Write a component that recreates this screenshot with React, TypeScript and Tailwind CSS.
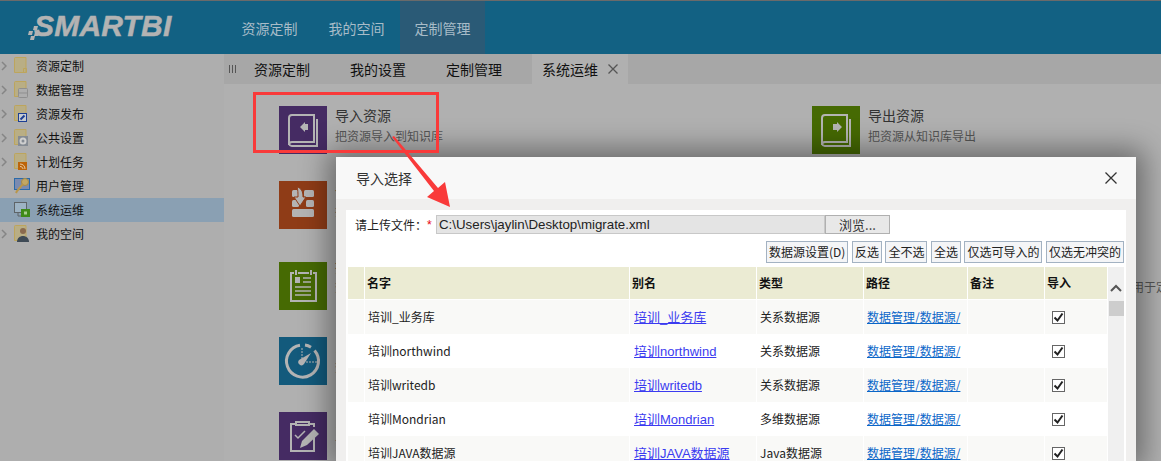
import type { ReactNode } from "react"

const folderFill = "#b9ae85"
const folderLine = "#bda55c"

function Folder({ children }: { children?: ReactNode }) {
    return (
        <svg width="17" height="18" viewBox="0 0 17 18">
            <path d="M.5 1.500a1 1 0 0 1 1-1h10.500v15H.5z" fill={folderFill} stroke={folderLine} />
            {children}
        </svg>
    )
}

const sideItems: { label: string; arrow: boolean; icon: ReactNode }[] = [
    {
        label: "资源定制",
        arrow: true,
        icon: (
            <Folder>
                <path d="M9.500 11.500h3v4h-3z" fill="none" stroke={folderLine} />
            </Folder>
        ),
    },
    {
        label: "数据管理",
        arrow: true,
        icon: (
            <Folder>
                <rect x="4.500" y="7.500" width="9" height="9" rx="1" fill="#aeaeae" stroke="#8f8f8f" />
                <path d="M5 12h8" stroke="#8f8f8f" />
            </Folder>
        ),
    },
    {
        label: "资源发布",
        arrow: true,
        icon: (
            <Folder>
                <rect x="4.500" y="8.500" width="8" height="8" fill="#c8ccd0" stroke="#1d3f94" />
                <path d="M6.500 14.500l4-4" stroke="#1d3f94" strokeWidth="2" />
            </Folder>
        ),
    },
    {
        label: "公共设置",
        arrow: true,
        icon: (
            <Folder>
                <rect x="4" y="7" width="10" height="10" fill="#858b93" />
                <circle cx="9" cy="12" r="2.500" fill="none" stroke="#cfcfcf" strokeWidth="2" />
            </Folder>
        ),
    },
    {
        label: "计划任务",
        arrow: true,
        icon: (
            <Folder>
                <rect x="4" y="9" width="9" height="8" fill="#bd6409" />
                <path d="M6 11c3 0 5 2 5 5M6 13.500c1.500 0 3 1 3 2.500" fill="none" stroke="#e8c9a0" />
            </Folder>
        ),
    },
    {
        label: "用户管理",
        arrow: false,
        icon: (
            <svg width="17" height="18" viewBox="0 0 17 18">
                <rect x=".5" y="1.500" width="15" height="11" fill="#7b8bb0" stroke="#2a6aa8" />
                <circle cx="11" cy="5" r="3.500" fill="#c2a765" stroke="#a58a45" />
                <path d="M9 7l-6 7-1 2" stroke="#b9964a" strokeWidth="2" fill="none" />
            </svg>
        ),
    },
    {
        label: "系统运维",
        arrow: false,
        icon: (
            <svg width="17" height="18" viewBox="0 0 17 18">
                <rect x=".5" y="1.500" width="12" height="10" fill="#9db3c4" stroke="#5e6468" />
                <path d="M4 12v3h3" stroke="#5e6468" fill="none" />
                <rect x="7" y="8" width="9" height="8" fill="#3e8a1a" />
                <rect x="10" y="10.500" width="3" height="3" fill="#a8cf90" />
            </svg>
        ),
    },
    {
        label: "我的空间",
        arrow: true,
        icon: (
            <Folder>
                <circle cx="9" cy="6" r="3" fill="#8a6a4e" />
                <path d="M3 17c0-4 3-6 6-6s6 2 6 6z" fill="#3e4a55" />
            </Folder>
        ),
    },
]

const stroke = "#b4b4b4"

function BookIcon({ direction }: { direction: "in" | "out" }) {
    return (
        <svg width="48" height="48" viewBox="0 0 48 48" fill="none" stroke={stroke} strokeWidth="2">
            <path d="M13 9h22v27H13a3 3 0 0 0-3 3V12a3 3 0 0 1 3-3z" />
            <path d="M38 13v27H13a3 3 0 0 1-3-2" />
            {direction === "in" ? (
                <path d="M21 21l5-5v2h3v6h-3v2z" fill={stroke} stroke="none" />
            ) : (
                <path d="M30 21l-5-5v2h-4v6h4v2z" fill={stroke} stroke="none" />
            )}
        </svg>
    )
}

function StackIcon() {
    return (
        <svg width="48" height="48" viewBox="0 0 48 48" fill={stroke}>
            <rect x="25" y="9" width="10" height="7" rx="1.500" />
            <rect x="27" y="19" width="8" height="7" rx="1.500" />
            <rect x="13" y="19" width="7" height="7" rx="1.500" />
            <rect x="13" y="28" width="22" height="8" rx="1.500" />
            <rect x="13" y="9" width="7" height="7" rx="1.500" />
            <path d="M18 6c4 1 6 4 6 10h3l-6 9-6-9h4c0-4 0-7-1-10z" stroke="#8f3c17" />
        </svg>
    )
}

function ClipboardIcon() {
    return (
        <svg width="48" height="48" viewBox="0 0 48 48" fill="none" stroke={stroke} strokeWidth="2">
            <path d="M15 11h-3v28h25V11h-3M19 11h11M17 8v5M32 8v5" />
            <rect x="16" y="15" width="5" height="6" fill={stroke} stroke="none" />
            <path d="M24 16h8M24 20h8M16 25h16M16 29h16M16 33h16" strokeWidth="1.500" />
        </svg>
    )
}

function GaugeIcon() {
    return (
        <svg width="48" height="48" viewBox="0 0 48 48" fill="none" stroke={stroke}>
            <path d="M35.500 13.500A16 16 0 1 1 21 8.300M26 8.100A16 16 0 0 1 32 10.200" strokeWidth="3" />
            <path d="M23 11v11M27 25h13" strokeWidth="1" strokeDasharray="2 1" />
            <path d="M20 23l12-7-7 11a3 3 0 0 1-5-4z" fill={stroke} stroke="none" />
        </svg>
    )
}

function TaskIcon() {
    return (
        <svg width="48" height="48" viewBox="0 0 48 48" fill="none" stroke={stroke} strokeWidth="2">
            <path d="M35 21v18H12V12h5M30 12h5v3M17 10h13v3H17z" />
            <path d="M16 23l3 3 7-7" strokeWidth="1.500" />
            <path d="M21 36l2-7 12-12 5 5-12 11z" fill={stroke} stroke="none" />
        </svg>
    )
}

const tiles: { color: string; icon: ReactNode; title: string; desc: string; tall?: boolean }[] = [
    { color: "bg-[#452b63]", icon: <BookIcon direction="in" />, title: "导入资源", desc: "把资源导入到知识库" },
    { color: "bg-[#466a03]", icon: <BookIcon direction="out" />, title: "导出资源", desc: "把资源从知识库导出" },
    { color: "bg-[#8f3c17]", icon: <StackIcon />, title: "备份知识库", desc: "把知识库备份到文件" },
    { color: "bg-[#135a7c]", icon: <GaugeIcon />, title: "恢复知识库", desc: "从文件恢复知识库" },
    { color: "bg-[#466a03]", icon: <ClipboardIcon />, title: "操作日志", desc: "查看用户的操作记录", tall: true },
    {
        color: "bg-[#135a7c]",
        icon: <GaugeIcon />,
        title: "系统检查",
        desc: "把系统运行状态的检查结果记录到日志中，并可以用于定位问题",
        tall: true,
    },
    { color: "bg-[#135a7c]", icon: <GaugeIcon />, title: "系统监控", desc: "查看系统运行情况" },
    { color: "bg-[#452b63]", icon: <TaskIcon />, title: "计划任务", desc: "管理系统计划任务" },
    { color: "bg-[#452b63]", icon: <TaskIcon />, title: "系统选项", desc: "设置系统选项" },
]

const rows = [
    ["培训_业务库", "关系数据源"],
    ["培训northwind", "关系数据源"],
    ["培训writedb", "关系数据源"],
    ["培训Mondrian", "多维数据源"],
    ["培训JAVA数据源", "Java数据源"],
]

const toolButtons = ["数据源设置(D)", "反选", "全不选", "全选", "仅选可导入的", "仅选无冲突的"]

const gridCols = "grid grid-cols-[16px_264px_126px_106px_103px_76px_62px] gap-x-px"

function Checkbox() {
    return (
        <div className="flex h-[13px] w-[13px] items-center justify-center border border-[#666] bg-white">
            <svg width="11" height="11" viewBox="0 0 11 11" fill="none" stroke="#222" strokeWidth="2">
                <path d="M1.500 5.500l3 3 5-7" />
            </svg>
        </div>
    )
}

function ImportDialog() {
    return (
        <div className="absolute left-[336px] top-[157px] h-[304px] w-[800px] rounded-t-[2px] bg-[#f0efee] shadow-[0_0_28px_8px_rgba(0,0,0,0.4)]">
            <div className="flex h-[42px] items-center justify-between bg-[#f8f8f8] pl-5 pr-[19px]">
                <span className="text-sm text-[#333]">导入选择</span>
                <svg width="12" height="12" viewBox="0 0 12 12" stroke="#333" strokeWidth="1.300">
                    <path d="M.5.500l11 11M11.500.500l-11 11" />
                </svg>
            </div>
            <div className="mx-2.5 mt-[11px] h-[251px] bg-white">
                <div className="flex h-[24px] items-end pl-[9px]">
                    <span className="flex h-[19px] w-[81px] items-center text-xs text-[#222]">
                        请上传文件：<span className="font-['Liberation_Sans'] text-red-600">*</span>
                    </span>
                    <div className="flex h-[19px] w-[389px] items-center border border-[#c8c8c8] bg-[#e4e4e4] pl-[2px] font-['Liberation_Sans'] text-[13.3px] text-[#222]">
                        C:\Users\jaylin\Desktop\migrate.xml
                    </div>
                    <div className="flex h-[19px] w-[65px] items-center justify-center border border-[#b0b0b0] bg-[#e8e8e8] text-[13px] text-[#333]">
                        浏览...
                    </div>
                </div>
                <div className="mt-[7px] flex h-[22px] justify-end gap-[3.500px] pr-[2px]">
                    {toolButtons.map((label) => (
                        <div
                            key={label}
                            className="flex items-center border border-[#a3b2c2] bg-[#f4f5f7] px-[2px] text-xs whitespace-nowrap text-[#222]"
                        >
                            {label}
                        </div>
                    ))}
                </div>
                <div className="mt-1 ml-[2px] flex">
                    <div className="w-[759px]">
                        <div className={`${gridCols} mb-px h-8 text-xs font-bold text-[#111]`}>
                            <div className="bg-[#ebebd3]" />
                            {["名字", "别名", "类型", "路径", "备注", "导入"].map((head) => (
                                <div key={head} className="flex items-center bg-[#ebebd3] pl-[2px] first:pl-[3px]">
                                    {head}
                                </div>
                            ))}
                        </div>
                        {rows.map(([name, kind], i) => {
                            const band = i % 2 === 0 ? "bg-[#f9f9f7]" : "bg-white"
                            return (
                                <div key={name} className={`${gridCols} h-[34px] text-xs`}>
                                    <div className={band} />
                                    <div className={`${band} flex items-center pl-[3px] text-[#222]`}>{name}</div>
                                    <div className={`${band} flex items-center pt-px pl-1`}>
                                        <a className="font-['Liberation_Sans','Noto_Sans_CJK_SC',sans-serif] text-[13px] text-[#3b3bf0] underline">
                                            {name}
                                        </a>
                                    </div>
                                    <div className={`${band} flex items-center pl-[3px] text-[#222]`}>{kind}</div>
                                    <div className={`${band} flex items-center pl-[3px]`}>
                                        <a className="whitespace-nowrap text-[#0a66c8] underline">数据管理/数据源/</a>
                                    </div>
                                    <div className={band} />
                                    <div className={`${band} flex items-center pl-[7px]`}>
                                        <Checkbox />
                                    </div>
                                </div>
                            )
                        })}
                    </div>
                    <div className="ml-px flex w-4 flex-col items-center bg-[#f0f0f0] pt-[17px]">
                        <svg width="12" height="8" viewBox="0 0 12 8" fill="none" stroke="#555" strokeWidth="2">
                            <path d="M1 7l5-5 5 5" />
                        </svg>
                        <div className="mt-[9px] h-[15px] w-[15px] bg-[#cdcdcd]" />
                    </div>
                </div>
            </div>
        </div>
    )
}

export default function App() {
    return (
        <div className="relative flex h-[461px] w-[1161px] flex-col overflow-hidden bg-[#b0b0b0] font-['Noto_Sans_CJK_SC',sans-serif]">
            <header className="flex h-[54px] shrink-0 border-t border-[#6a6a6a] bg-[#126183]">
                <div className="flex w-[227px] items-center pb-[3px] pl-[26px]">
                    <svg width="14" height="14" viewBox="0 0 14 14" fill="#b3b3b3" className="mt-[14px] -mr-[6px]">
                        <path d="M8 0h4l-1 4H7zM3 5h4L6 9H2zM9 6h4l-1 4H8zM5 10h4l-1 4H4z" />
                    </svg>
                    <span className="font-['Liberation_Sans'] text-[30px] font-bold italic leading-none tracking-[0.2px] text-[#b3b3b3] [-webkit-text-stroke:0.5px_#b3b3b3]">
                        SMARTBI
                    </span>
                </div>
                <nav className="flex text-sm text-[#a8bcc8]">
                    <div className="flex w-[86px] items-center justify-center pr-[1px]">资源定制</div>
                    <div className="flex w-[87px] items-center justify-center">我的空间</div>
                    <div className="flex w-[85px] items-center justify-center bg-[#2a5a76]">定制管理</div>
                </nav>
            </header>

            <div className="flex min-h-0 flex-1">
                <aside className="w-[224px] shrink-0 bg-[#aeaeae]">
                    {sideItems.map((item) => (
                        <div
                            key={item.label}
                            className={`flex h-6 items-center text-xs text-[#111] ${item.label === "系统运维" ? "bg-[#8aa0b3]" : ""}`}
                        >
                            <div className="w-[14px] pl-px">
                                {item.arrow && (
                                    <svg width="6" height="10" viewBox="0 0 6 10" fill="none" stroke="#858585" strokeWidth="1.500">
                                        <path d="M1 1l4 4-4 4" />
                                    </svg>
                                )}
                            </div>
                            <div className="mr-[5px] w-[17px]">{item.icon}</div>
                            {item.label}
                        </div>
                    ))}
                </aside>

                <main className="flex min-w-0 flex-1 flex-col">
                    <div className="flex h-[30px] shrink-0 bg-[#a7a7a7] text-sm text-[#111]">
                        <div className="flex w-[10px] items-center justify-between pl-[5px] text-[#555]">
                            <span className="h-2 w-[7px] shrink-0 border-x border-[#555] bg-[linear-gradient(#555,#555)] bg-[length:1px_100%] bg-center bg-no-repeat" />
                        </div>
                        <div className="flex w-[96px] items-center justify-center pl-0">资源定制</div>
                        <div className="flex w-[96px] items-center justify-center">我的设置</div>
                        <div className="flex w-[96px] items-center justify-center">定制管理</div>
                        <div className="ml-[10px] flex w-[96px] items-center gap-2.5 bg-[#b0b0b0] pl-2.5">
                            系统运维
                            <svg width="10" height="10" viewBox="0 0 10 10" stroke="#555" strokeWidth="1.300">
                                <path d="M.5.500l9 9M9.500.500l-9 9" />
                            </svg>
                        </div>
                    </div>
                    <div className="ml-[3px] grid flex-1 grid-cols-[533px_1fr] content-start gap-y-[27px] bg-[#b0b0b0] pt-[22px] pl-[52px]">
                        {tiles.map((tile) => (
                            <div key={tile.title} className={`flex h-12 w-[300px] gap-2 ${tile.tall ? "mt-[6px]" : ""}`}>
                                <div className={`h-12 w-12 shrink-0 ${tile.color}`}>{tile.icon}</div>
                                <div className={tile.tall ? "-mt-[5px]" : ""}>
                                    <div className="-mt-px h-[21px] text-sm leading-5 text-[#333]">{tile.title}</div>
                                    <div className="h-5 text-xs leading-5 whitespace-nowrap text-[#555]">{tile.desc}</div>
                                </div>
                            </div>
                        ))}
                    </div>
                </main>
            </div>

            <ImportDialog />

            {/* red callout box and arrow drawn on top of the dialog */}
            <div className="absolute left-[253px] top-[92px] h-[61px] w-[186px] border-[3px] border-[#f93a3a]" />
            <svg className="absolute left-0 top-0" width="1161" height="461">
                <path d="M392 137l2-1 44 52 7-6 5 25-23-10 7-6z" fill="#f93a3a" />
            </svg>
        </div>
    )
}
